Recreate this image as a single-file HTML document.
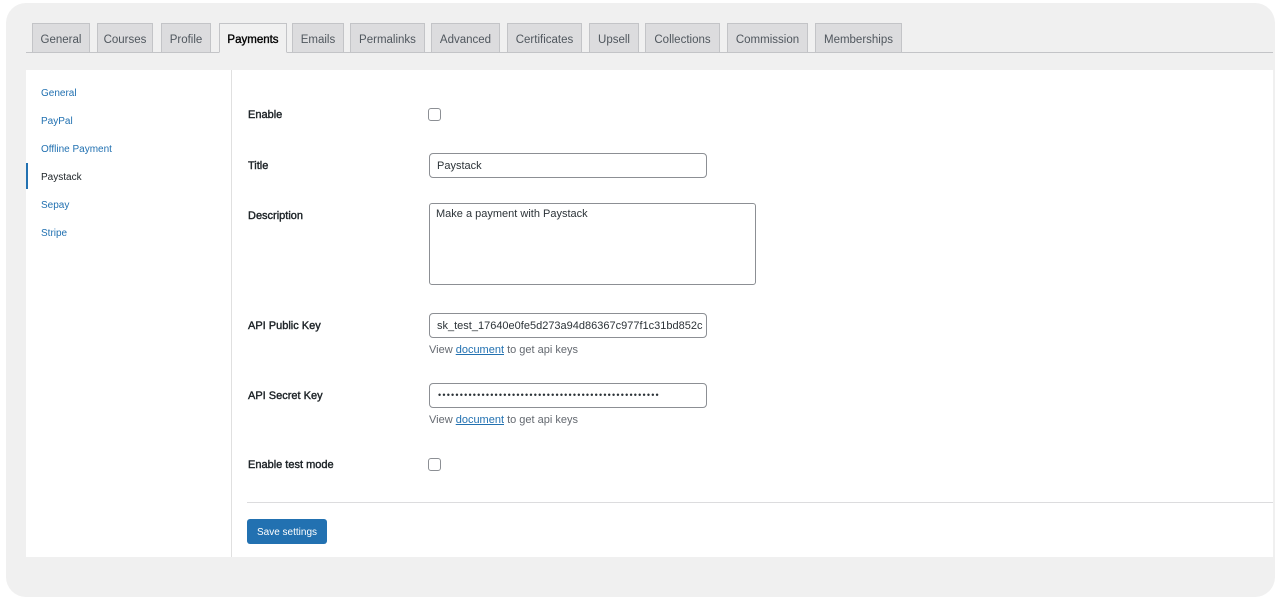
<!DOCTYPE html><html><head><style>
body{margin:0;width:1281px;height:600px;background:#fff;font-family:"Liberation Sans",sans-serif;position:relative;overflow:hidden}
.frame{position:absolute;left:6px;top:3px;width:1269px;height:594px;background:#f0f0f0;border-radius:20px}
.tab{position:absolute;top:23px;height:29px;background:#dcdcde;border:1px solid #c3c4c7;border-bottom:none;font-size:11.5px;color:#50575e;line-height:32px;text-align:center;box-sizing:border-box}
.tab.a{background:#f0f0f0;color:#000;height:30px;border-bottom:1px solid #f0f0f0;z-index:2;-webkit-text-stroke:0.35px #000}
.line{position:absolute;left:26px;top:52px;width:1247px;height:1px;background:#c3c4c7}
.content{position:absolute;left:26px;top:70px;width:1247px;height:487px;background:#fff}
.side{position:absolute;left:231px;top:70px;width:1px;height:487px;background:#e0e0e0}
.sl{position:absolute;left:41px;font-size:10px;color:#2271b1;margin-top:1px}
.lab{position:absolute;left:248px;font-size:11px;color:#1d2327;margin-top:1px;-webkit-text-stroke:0.4px #1d2327}
.inp{position:absolute;left:429px;width:278px;height:25px;border:1px solid #8c8f94;border-radius:4px;box-sizing:border-box;font-size:11px;color:#2c3338;padding:6px 7px;overflow:hidden;white-space:nowrap;background:#fff}
.cb{position:absolute;left:428px;width:13px;height:13px;border:1px solid #8c8f94;border-radius:3px;box-sizing:border-box;background:#fff}
.hint{position:absolute;left:429px;font-size:11px;color:#646970;margin-top:1px}
.hint a{color:#2271b1;text-decoration:underline}
</style></head><body>
<div class="frame"></div>
<div class="tab" style="left:32px;width:58px">General</div>
<div class="tab" style="left:97px;width:56px">Courses</div>
<div class="tab" style="left:161px;width:50px">Profile</div>
<div class="tab a" style="left:219px;width:68px">Payments</div>
<div class="tab" style="left:292px;width:52px">Emails</div>
<div class="tab" style="left:350px;width:75px">Permalinks</div>
<div class="tab" style="left:431px;width:69px">Advanced</div>
<div class="tab" style="left:507px;width:75px">Certificates</div>
<div class="tab" style="left:589px;width:50px">Upsell</div>
<div class="tab" style="left:645px;width:75px">Collections</div>
<div class="tab" style="left:727px;width:81px">Commission</div>
<div class="tab" style="left:815px;width:87px">Memberships</div>
<div class="line"></div>
<div class="content"></div>
<div class="side"></div>
<div class="sl" style="top:87px">General</div>
<div class="sl" style="top:115px">PayPal</div>
<div class="sl" style="top:143px">Offline Payment</div>
<div style="position:absolute;left:26px;top:163px;width:2px;height:26px;background:#2271b1"></div>
<div class="sl" style="top:171px;color:#1d2327">Paystack</div>
<div class="sl" style="top:199px">Sepay</div>
<div class="sl" style="top:227px">Stripe</div>
<div class="lab" style="top:108px">Enable</div><div class="cb" style="top:108px"></div>
<div class="lab" style="top:159px">Title</div><div class="inp" style="top:153px">Paystack</div>
<div class="lab" style="top:209px">Description</div><div class="inp" style="top:203px;width:327px;height:82px;padding:4px 6px;border-radius:3px">Make a payment with Paystack</div>
<div class="lab" style="top:319px">API Public Key</div><div class="inp" style="top:313px">sk_test_17640e0fe5d273a94d86367c977f1c31bd852c</div>
<div class="hint" style="top:343px">View <a>document</a> to get api keys</div>
<div class="lab" style="top:389px">API Secret Key</div><div class="inp" style="top:383px;font-size:9px;letter-spacing:1.2px;padding-top:6px;padding-left:8px">•••••••••••••••••••••••••••••••••••••••••••••••••••</div>
<div class="hint" style="top:413px">View <a>document</a> to get api keys</div>
<div class="lab" style="top:458px">Enable test mode</div><div class="cb" style="top:458px"></div>
<div style="position:absolute;left:247px;top:502px;width:1026px;height:1px;background:#dcdcde"></div>
<div style="position:absolute;left:247px;top:519px;width:80px;height:25px;background:#2271b1;border-radius:3px;color:#fff;font-size:10px;line-height:27px;text-align:center">Save settings</div>
</body></html>
